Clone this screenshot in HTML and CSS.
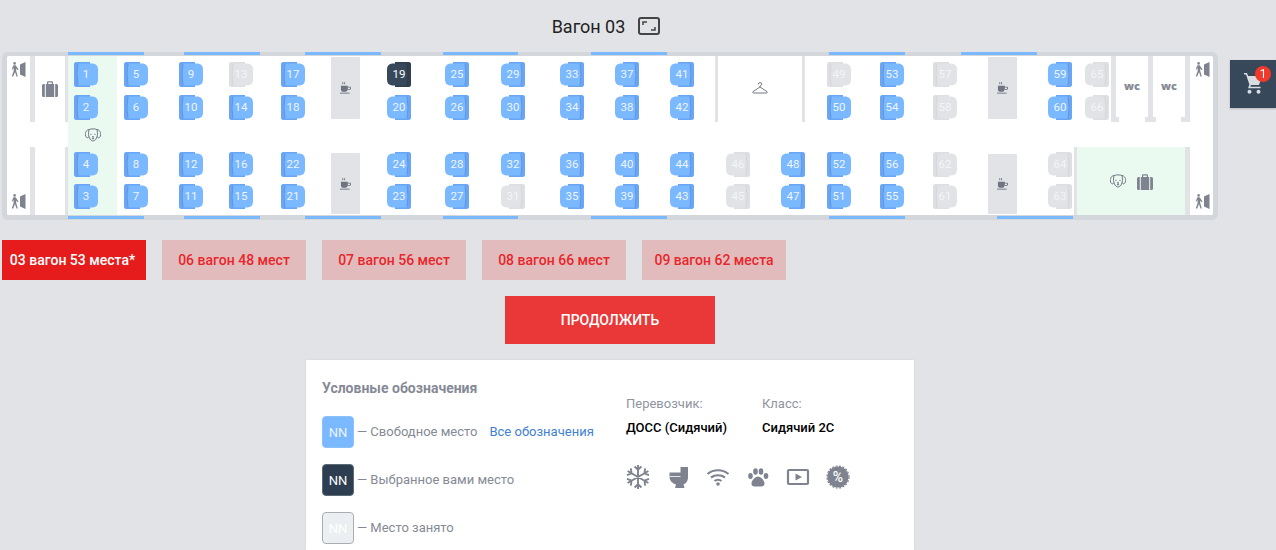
FILE: index.html
```html
<!DOCTYPE html>
<html lang="ru">

<head>
  <meta charset="UTF-8">
  <meta name="viewport" content="width=device-width, initial-scale=1.0">
  <title>Вагон 03</title>
  <link rel="stylesheet" href="styles.css">
</head>

<body>
  <svg class="sprites" width="0" height="0">
    <symbol id="seat" viewBox="0 0 24 25">
      <path class="seat-back" d="M3 0H16V1.500H19C22.500 2 24 4 24 7.500V17.500C24 21 22.500 23 19 23.500H16V25H3Q0 25 0 22V3Q0 0 3 0Z" />
      <path class="seat-strip" d="M3 0H16V1.500H4Q2 12.500 4 23.500H16V25H3Q0 25 0 22V3Q0 0 3 0Z" />
      <path class="seat-line" d="M4 1.500Q2 12.500 4 23.500" />
    </symbol>
    <symbol id="exit" viewBox="0 0 15 15">
      <circle cx="3.6" cy="1.4" r="1.3" />
      <path d="M2.4 3.2H4.6L7.6 7.6 6.8 8.2 5.2 6.4V9L6.8 14.6H5.5L4 10 2.2 14.6H.8L2.6 9V5.6L1.6 7.6.7 7.2Z" />
      <path d="M9 2.5 14.5 0V15L9 12.5Z" />
    </symbol>
    <symbol id="case" viewBox="0 0 16 16">
      <path d="M5 3V1.2Q5 .3 6 .3H10Q11 .3 11 1.2V3H9.8V1.4H6.2V3Z" />
      <path d="M1.5 3H2.8V16H1.5Q0 16 0 14.5V4.5Q0 3 1.5 3ZM3.8 3H12.2V16H3.8ZM13.2 3H14.5Q16 3 16 4.5V14.5Q16 16 14.5 16H13.2Z" />
    </symbol>
    <symbol id="dog" viewBox="0 0 16 14">
      <g class="thin">
        <path d="M4 1.6C6 .6 10 .6 12 1.6 12.6 5 13 8 11 11 9.5 13.6 6.5 13.6 5 11 3 8 3.4 5 4 1.6Z" />
        <path d="M4 1.6C1.2 1.6-.2 5 .6 8 1.2 10 3 10.6 4 8.4" />
        <path d="M12 1.6C14.8 1.6 16.2 5 15.4 8 14.8 10 13 10.6 12 8.4" />
        <path d="M8 9V10.5M6.8 11 8 10.5 9.2 11" />
      </g>
      <circle cx="6" cy="6.4" r=".7" />
      <circle cx="10" cy="6.4" r=".7" />
      <ellipse cx="8" cy="8.6" rx="1.1" ry=".7" />
    </symbol>
    <symbol id="cup" viewBox="0 0 12 13">
      <path d="M3 0V2.5M5 0V2.5" class="thin" />
      <path d="M1 4H8.5V5H11Q12 5 12 6.5T11 8.5H8.2Q8 10.5 6.5 10.5H3Q1 10.5 1 8ZM8.5 6V7.6H10.4Q11 7.6 11 6.8T10.4 6Z" />
      <rect x="0" y="11.6" width="10.5" height="1" />
    </symbol>
    <symbol id="hanger" viewBox="0 0 16 12">
      <path class="thin" d="M6.2 2.4Q6.2 .6 8 .6T9.8 2.2Q9.8 3.2 8 4V5L15 9.6Q15.8 11 14.5 11H1.5Q.2 11 1 9.6L8 5" />
    </symbol>
    <symbol id="cart" viewBox="0 0 18 21">
      <path d="M0 0H3L4.100 3H18L15 12H7L6.300 13.800H16.500V15.300H4L5.400 11.500 2 1.500H0Z" />
      <circle cx="5.500" cy="18.800" r="2" />
      <circle cx="14.500" cy="18.800" r="2" />
    </symbol>
  </svg>

  <div class="main">
    <div class="wagonTitle">
      <span>Вагон 03</span>
      <svg class="expandIcon" width="22" height="18" viewBox="0 0 22 18">
        <rect x="1" y="1" width="20" height="16" rx="2" />
        <path d="M5 8V5H9M17 10V13H13" />
      </svg>
    </div>

    <div class="wagonMap" id="wagonMap">
      <i class="window" style="left:61px;top:-4px;width:76px"></i>
      <i class="window" style="left:177px;top:-4px;width:76px"></i>
      <i class="window" style="left:298px;top:-4px;width:76px"></i>
      <i class="window" style="left:436px;top:-4px;width:75px"></i>
      <i class="window" style="left:584px;top:-4px;width:76px"></i>
      <i class="window" style="left:822px;top:-4px;width:76px"></i>
      <i class="window" style="left:954px;top:-4px;width:76px"></i>
      <i class="window windowBottom" style="left:61px;width:76px"></i>
      <i class="window windowBottom" style="left:177px;width:76px"></i>
      <i class="window windowBottom" style="left:298px;width:76px"></i>
      <i class="window windowBottom" style="left:436px;width:75px"></i>
      <i class="window windowBottom" style="left:584px;width:76px"></i>
      <i class="window windowBottom" style="left:822px;width:76px"></i>
      <i class="window windowBottom" style="left:990px;width:76px"></i>

      <div class="petZone petZoneLeft"></div>
      <div class="petZone petZoneRight"></div>

      <i class="wall wallTop" style="left:23px;width:5px"></i>
      <i class="wall wallTop" style="left:58px;width:3px"></i>
      <i class="wall wallBottom" style="left:23px;width:5px"></i>
      <i class="wall wallBottom" style="left:58px;width:3px"></i>
      <i class="wall wallTop" style="left:708px;width:3px"></i>
      <i class="wall wallTop" style="left:795px;width:3px"></i>
      <i class="wall wallTop" style="left:1104px;width:5px"></i>
      <i class="wall wallTop" style="left:1141px;width:5px"></i>
      <i class="wall wallTop" style="left:1178px;width:5px"></i>
      <i class="wall wallFoot" style="left:1104px;width:8px"></i>
      <i class="wall wallFoot" style="left:1138px;width:11px"></i>
      <i class="wall wallFoot" style="left:1174px;width:9px"></i>
      <i class="wall wallBottom" style="left:1067px;width:3px"></i>
      <i class="wall wallBottom" style="left:1178px;width:5px"></i>

      <div class="tableBox" style="left:324px;top:1px;height:62px"><svg class="cupIcon"><use href="#cup" /></svg></div>
      <div class="tableBox" style="left:324px;top:97px;height:61px"><svg class="cupIcon"><use href="#cup" /></svg></div>
      <div class="tableBox" style="left:981px;top:1px;height:62px"><svg class="cupIcon"><use href="#cup" /></svg></div>
      <div class="tableBox" style="left:981px;top:98px;height:60px"><svg class="cupIcon"><use href="#cup" /></svg></div>

      <svg class="mapIcon" style="left:4px;top:6px;width:15px;height:15px"><use href="#exit" /></svg>
      <svg class="mapIcon" style="left:4px;top:138px;width:15px;height:15px"><use href="#exit" /></svg>
      <svg class="mapIcon" style="left:1188px;top:6px;width:15px;height:15px"><use href="#exit" /></svg>
      <svg class="mapIcon" style="left:1188px;top:138px;width:15px;height:15px"><use href="#exit" /></svg>
      <svg class="mapIcon" style="left:35px;top:25px;width:16px;height:16px"><use href="#case" /></svg>
      <svg class="mapIcon" style="left:78px;top:72px;width:16px;height:14px"><use href="#dog" /></svg>
      <svg class="mapIcon" style="left:1103px;top:118px;width:16px;height:14px"><use href="#dog" /></svg>
      <svg class="mapIcon" style="left:1130px;top:118px;width:16px;height:16px"><use href="#case" /></svg>
      <svg class="mapIcon" style="left:745px;top:26px;width:16px;height:12px"><use href="#hanger" /></svg>

      <span class="wc" style="left:1109px">wc</span>
      <span class="wc" style="left:1146px">wc</span>
    </div>

    <div class="cart">
      <svg class="cartIcon"><use href="#cart" /></svg>
      <span class="cartBadge">1</span>
    </div>

    <div class="tabs">
      <a class="tab active">03 вагон 53 места*</a>
      <a class="tab">06 вагон 48 мест</a>
      <a class="tab">07 вагон 56 мест</a>
      <a class="tab">08 вагон 66 мест</a>
      <a class="tab">09 вагон 62 места</a>
    </div>

    <button class="continueBtn">ПРОДОЛЖИТЬ</button>

    <div class="infoCard">
      <div class="legend">
        <h3>Условные обозначения</h3>
        <div class="legendRow">
          <span class="legendBox free">NN</span>
          <span class="legendText">— Свободное место</span>
          <a class="legendText legendLink">Все обозначения</a>
        </div>
        <div class="legendRow">
          <span class="legendBox chosen">NN</span>
          <span class="legendText">— Выбранное вами место</span>
        </div>
        <div class="legendRow">
          <span class="legendBox taken">NN</span>
          <span class="legendText">— Место занято</span>
        </div>
      </div>
      <div class="details">
        <div class="detailGrid">
          <span class="detailLabel">Перевозчик:</span>
          <span class="detailLabel">Класс:</span>
          <b>ДОСС (Сидячий)</b>
          <b>Сидячий 2С</b>
        </div>
        <div class="services">
          <svg width="24" height="24" viewBox="0 0 24 24">
            <path class="snow" d="M12 0V24M1.600 6 22.400 18M1.600 18 22.400 6M8.600 1.500 12 4.800 15.400 1.500M8.600 22.500 12 19.200 15.400 22.500M1 10.200 5.600 8.400 4.800 3.400M23 10.200 18.400 8.400 19.200 3.400M1 13.800 5.600 15.600 4.800 20.600M23 13.800 18.400 15.600 19.200 20.600" />
          </svg>
          <svg width="24" height="24" viewBox="0 0 24 24">
            <path d="M14.500 2H22V12.500C22 16 20 18.500 17.500 19.500L18.500 23H9L10 19.500C6.500 18.500 3.500 15.500 3.500 12V7.500H14.500Z" />
            <path class="toiletGap" d="M3.500 11.500H14.500" />
          </svg>
          <svg width="24" height="24" viewBox="0 0 24 24">
            <path class="arc" d="M1.500 9C7.500 4 16.500 4 22.500 9M5 12.500C9 9.500 15 9.500 19 12.500M8.500 16C10.500 14.300 13.500 14.300 15.500 16" />
            <circle cx="12" cy="19" r="1.800" />
          </svg>
          <svg width="24" height="24" viewBox="0 0 24 24">
            <ellipse cx="4.500" cy="11" rx="2.300" ry="3" />
            <ellipse cx="9.500" cy="6.500" rx="2.300" ry="3.300" />
            <ellipse cx="15" cy="6.500" rx="2.300" ry="3.300" />
            <ellipse cx="20" cy="11" rx="2.300" ry="3" />
            <path d="M12 11.500C15 11.500 18.500 15.500 18.500 18.500 18.500 22 15 21.500 12 21.500S5.500 22 5.500 18.500C5.500 15.500 9 11.500 12 11.500Z" />
          </svg>
          <svg width="24" height="24" viewBox="0 0 24 24">
            <rect class="arc" x="2" y="5" width="20" height="14" rx="1" />
            <path d="M9.500 8.500 16 12 9.500 15.500Z" />
          </svg>
          <svg width="24" height="24" viewBox="0 0 24 24">
            <circle cx="12" cy="12" r="10.600" />
            <circle class="teeth" cx="12" cy="12" r="11" />
            <text x="12" y="17" class="percent">%</text>
          </svg>
        </div>
      </div>
    </div>
  </div>
  <script src="script.js"></script>
</body>

</html>
```

FILE: styles.css
```css
html,
body {
  margin: 0;
  height: 550px;
  overflow: hidden;
  background-color: #e1e3e7;
  font-family: Roboto, "Liberation Sans", sans-serif;
}

.sprites {
  position: absolute;
}

.main {
  width: 1220px;
  position: relative;
}

.wagonTitle {
  height: 52px;
  padding-right: 8px;
  box-sizing: border-box;
  display: flex;
  align-items: center;
  justify-content: center;
  gap: 13px;
  font-size: 18px;
  color: #222;
}

.expandIcon {
  fill: none;
  stroke: #444;
  stroke-width: 2;
}

.expandIcon path {
  stroke-width: 1.5;
}

/* seat map */
.wagonMap {
  position: relative;
  margin-left: 2px;
  width: 1206px;
  height: 159px;
  background-color: #fff;
  border: 5px solid #d3d6da;
  border-top-width: 4px;
  border-radius: 6px;
  background-clip: padding-box;
}

.window {
  position: absolute;
  height: 3px;
  background-color: #7ab8ff;
}

.windowBottom {
  top: 160px;
}

.petZone {
  position: absolute;
  background-color: #eafaf0;
}

.petZoneLeft {
  left: 61px;
  top: 0;
  width: 49px;
  height: 159px;
}

.petZoneRight {
  left: 1070px;
  top: 91px;
  width: 108px;
  height: 68px;
}

.wall {
  position: absolute;
  background-color: #e1e3e7;
}

.wallTop {
  top: 0;
  height: 66px;
}

.wallFoot {
  top: 61px;
  height: 5px;
}

.wallBottom {
  top: 91px;
  height: 68px;
}

.tableBox {
  position: absolute;
  width: 29px;
  background-color: #e1e3e7;
  border-radius: 1px;
  display: flex;
  align-items: center;
  justify-content: center;
}

.cupIcon {
  width: 11px;
  height: 12px;
  fill: #6f7480;
}

.mapIcon {
  position: absolute;
  fill: #7e838f;
}

.thin {
  fill: none;
  stroke: #747985;
  stroke-width: 1;
}

.wc {
  position: absolute;
  top: 23px;
  width: 32px;
  text-align: center;
  font-family: "Open Sans", sans-serif;
  font-size: 11px;
  line-height: 14px;
  font-weight: 800;
  color: #858a96;
}

.seat {
  position: absolute;
  width: 24px;
  height: 25px;
  line-height: 24px;
  text-align: center;
  font-size: 11.500px;
  color: #eef5ff;
  --seat-fill: #7ab8ff;
  --seat-strip: #6ba6f5;
  --seat-line: #5f96e6;
}

.seat svg {
  position: absolute;
  left: 0;
  top: 0;
  width: 24px;
  height: 25px;
}

.seat span {
  position: relative;
}

.seatFlip svg {
  transform: scaleX(-1);
}

.seatBusy {
  --seat-fill: #e1e3e7;
  --seat-strip: #dddfe3;
  --seat-line: #d3d6da;
  color: #f4f5f6;
}

.seatChosen {
  --seat-fill: #37485a;
  --seat-strip: #323f4f;
  --seat-line: #2c3a49;
  color: #fff;
}

.seat-back {
  fill: var(--seat-fill);
}

.seat-strip {
  fill: var(--seat-strip);
}

.seat-line {
  fill: none;
  stroke: var(--seat-line);
  stroke-width: 1;
}

/* cart */
.cart {
  position: fixed;
  left: 1230px;
  top: 60px;
  width: 46px;
  height: 48px;
  background-color: #37485a;
  box-shadow: 0 1px 2px rgba(0, 0, 0, 0.2);
}

.cartIcon {
  position: absolute;
  left: 14px;
  top: 13px;
  width: 18px;
  height: 21px;
  fill: #d8dde2;
}

.cartBadge {
  position: absolute;
  left: 25px;
  top: 6px;
  width: 16px;
  height: 16px;
  border-radius: 50%;
  background-color: #f0392b;
  color: #fff;
  font-size: 12px;
  line-height: 16px;
  text-align: center;
}

/* tabs */
.tabs {
  display: flex;
  gap: 16px;
  margin: 20px 0 16px 2px;
}

.tab {
  width: 144px;
  height: 40px;
  background-color: #e2bcbc;
  color: #e8262b;
  font-size: 14px;
  font-weight: 500;
  display: flex;
  align-items: center;
  justify-content: center;
}

.tab.active {
  box-sizing: border-box;
  padding-right: 3px;
  background-color: #e61c1c;
  color: #fff;
}

.continueBtn {
  display: block;
  width: 210px;
  height: 48px;
  margin: 0 auto 16px;
  border: none;
  background-color: #ea3737;
  color: #fff;
  font-family: inherit;
  font-size: 14px;
  font-weight: 500;
}

/* legend card */
.infoCard {
  width: 608px;
  height: 190px;
  margin: 0 auto;
  padding: 20px 16px 0;
  box-sizing: border-box;
  background-color: #fff;
  box-shadow: 0 0 2px rgba(0, 0, 0, 0.08);
  display: flex;
}

.legend {
  width: 304px;
  flex-shrink: 0;
}

.legend h3 {
  margin: 0 0 20px;
  font-size: 14px;
  line-height: 16px;
  font-weight: 700;
  color: #858a96;
}

.legendRow {
  display: flex;
  align-items: center;
  height: 32px;
  margin-bottom: 16px;
  font-size: 13px;
  color: #858a96;
}

.legendRow:last-child {
  margin-bottom: 0;
}

.legendText {
  margin-bottom: 2px;
}

.legendBox {
  width: 32px;
  height: 32px;
  box-sizing: border-box;
  margin-right: 3px;
  border: 1px solid transparent;
  border-radius: 4px;
  display: flex;
  align-items: center;
  justify-content: center;
  font-size: 13px;
}

.legendBox.free {
  background-color: #7ab8ff;
  border-color: #8cc0fb;
  color: #eaf4ff;
}

.legendBox.chosen {
  background-color: #2c3e50;
  border-color: #5d6a78;
  color: #fff;
}

.legendBox.taken {
  background-color: #eceff1;
  border-color: #a9adb3;
  color: #fff;
}

.legendLink {
  margin-left: 12px;
  color: #3f7fd6;
}

.detailGrid {
  display: grid;
  grid-template-columns: 136px 136px;
  row-gap: 8px;
  padding-top: 16px;
  font-size: 13px;
  line-height: 16px;
}

.detailLabel {
  color: #8f94a0;
}

.detailGrid b {
  font-weight: 500;
  color: #000;
}

.services {
  display: flex;
  gap: 16px;
  margin-top: 29px;
  fill: #7e838f;
}

.snow,
.arc {
  fill: none;
  stroke: #7e838f;
  stroke-width: 2.200;
}

.snow {
  stroke-width: 1.900;
}

.toiletGap {
  stroke: #fff;
  stroke-width: 0.800;
}

.teeth {
  fill: none;
  stroke: #7e838f;
  stroke-width: 1.200;
  stroke-dasharray: 2 1.500;
}

.percent {
  fill: #fff;
  font-size: 14px;
  font-weight: 500;
  text-anchor: middle;
}
```

FILE: script.js
```js
// rows of the map, y is relative to the white area of the wagon
const ROW = [6, 39, 96, 128];

// [number, x, row, back on the right?]
const seats = [
  [1, 67, 0], [2, 67, 1], [4, 67, 2], [3, 67, 3],
  [5, 117, 0], [6, 117, 1], [8, 117, 2], [7, 117, 3],
  [9, 172, 0], [10, 172, 1], [12, 172, 2], [11, 172, 3],
  [13, 222, 0], [14, 222, 1], [16, 222, 2], [15, 222, 3],
  [17, 274, 0], [18, 274, 1], [22, 274, 2], [21, 274, 3],
  [19, 380, 0, 1], [20, 380, 1, 1], [24, 380, 2, 1], [23, 380, 3, 1],
  [25, 438, 0, 1], [26, 438, 1, 1], [28, 438, 2, 1], [27, 438, 3, 1],
  [29, 494, 0, 1], [30, 494, 1, 1], [32, 494, 2, 1], [31, 494, 3, 1],
  [33, 553, 0, 1], [34, 553, 1, 1], [36, 553, 2, 1], [35, 553, 3, 1],
  [37, 608, 0, 1], [38, 608, 1, 1], [40, 608, 2, 1], [39, 608, 3, 1],
  [41, 663, 0, 1], [42, 663, 1, 1], [44, 663, 2, 1], [43, 663, 3, 1],
  [46, 719, 2, 1], [45, 719, 3, 1], [48, 774, 2, 1], [47, 774, 3, 1],
  [49, 820, 0], [50, 820, 1], [52, 820, 2], [51, 820, 3],
  [53, 873, 0], [54, 873, 1], [56, 873, 2], [55, 873, 3],
  [57, 926, 0], [58, 926, 1], [62, 926, 2], [61, 926, 3],
  [59, 1041, 0, 1], [60, 1041, 1, 1], [64, 1041, 2, 1], [63, 1041, 3, 1],
  [65, 1078, 0, 1], [66, 1078, 1, 1],
];

const busy = [13, 31, 45, 46, 49, 57, 58, 61, 62, 63, 64, 65, 66];
const chosen = 19;

const map = document.getElementById("wagonMap");

seats.forEach(([num, x, row, flip]) => {
  const seat = document.createElement("div");
  seat.className = "seat";
  if (flip) seat.classList.add("seatFlip");
  if (busy.includes(num)) seat.classList.add("seatBusy");
  if (num === chosen) seat.classList.add("seatChosen");
  seat.style.left = x + "px";
  seat.style.top = ROW[row] + "px";
  seat.innerHTML = `<svg><use href="#seat" /></svg><span>${num}</span>`;
  map.appendChild(seat);
});
```
